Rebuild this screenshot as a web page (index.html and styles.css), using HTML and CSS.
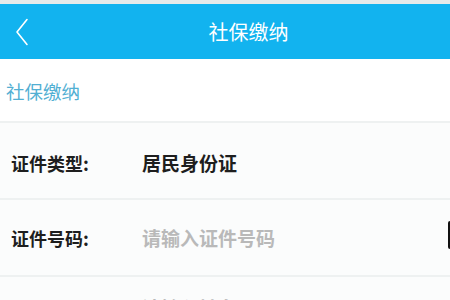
FILE: index.html
```html
<!DOCTYPE html>
<html lang="zh-CN">
<head>
<meta charset="utf-8">
<link rel="stylesheet" href="styles.css">
</head>
<body>
<div class="status"></div>
<header class="header">
  <svg class="back" width="14" height="28" viewBox="0 0 14 28"><polyline points="12,1.5 2,14 12,26.5" fill="none" stroke="#fff" stroke-width="1.6" stroke-linecap="round" stroke-linejoin="round"/></svg>
  <div class="title">社保缴纳</div>
</header>
<section class="section">
  <div class="section-label">社保缴纳</div>
</section>
<div class="form">
  <div class="row">
    <div class="label">证件类型:</div>
    <div class="value">居民身份证</div>
  </div>
  <div class="row">
    <div class="label">证件号码:</div>
    <div class="value placeholder">请输入证件号码</div>
    <div class="edge"></div>
  </div>
  <div class="row row-last">
    <div class="label">姓名:</div>
    <div class="value placeholder">请输入姓名</div>
  </div>
</div>
</body>
</html>
```
FILE: styles.css
```css
html, body {
  margin: 0;
  padding: 0;
}
body {
  width: 450px;
  height: 300px;
  overflow: hidden;
  background: #fbfcfc;
  font-family: "Noto Sans CJK SC", "Noto Sans", sans-serif;
}
.status {
  height: 4px;
  background: #e6eaea;
}
.header {
  height: 55px;
  background: #12b3ef;
  display: flex;
  align-items: center;
  padding-left: 15px;
}
.back {
  display: block;
}
.title {
  flex: 1;
  text-align: center;
  padding-left: 18px;
  color: #fff;
  font-size: 20px;
  line-height: 24px;
}
.section {
  height: 62px;
  background: #ffffff;
  display: flex;
  align-items: center;
  padding-left: 6px;
}
.section-label {
  color: #52afd3;
  font-size: 18.5px;
  line-height: 22px;
  margin-top: 1px;
}
.form {
  display: flex;
  flex-direction: column;
}
.row {
  position: relative;
  height: 75px;
  border-top: 2px solid #eef1f1;
  display: flex;
  align-items: center;
  padding-left: 11px;
}
.row:first-child {
  padding-top: 4px;
  height: 71px;
}
.label {
  width: 131px;
  font-size: 18px;
  font-weight: bold;
  color: #1e1e1e;
  line-height: 22px;
}
.value {
  font-size: 19px;
  font-weight: bold;
  color: #1e1e1e;
  line-height: 22px;
}
.placeholder {
  color: #b9b9b9;
}
.row-last {
  align-items: flex-start;
  padding-top: 20px;
}
.edge {
  position: absolute;
  right: 0;
  top: 21px;
  width: 2.5px;
  height: 28px;
  background: #111;
  border-radius: 2px 0 0 2px;
}
```
